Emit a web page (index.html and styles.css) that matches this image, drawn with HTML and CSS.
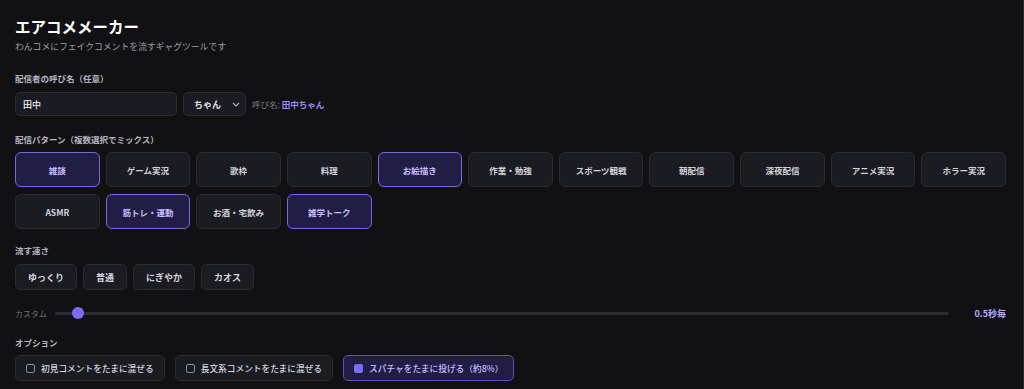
FILE: index.html
```html
<!DOCTYPE html>
<html lang="ja">
<head>
<meta charset="utf-8">
<title>エアコメメーカー</title>
<link rel="stylesheet" href="styles.css">
</head>
<body>
<main class="app">
  <h1 class="title">エアコメメーカー</h1>
  <p class="sub">わんコメにフェイクコメントを流すギャグツールです</p>

  <section class="sec sec-name">
    <div class="label">配信者の呼び名（任意）</div>
    <div class="name-row">
      <input class="input" type="text" value="田中">
      <select class="select"><option>ちゃん</option></select>
      <span class="preview">呼び名: <b>田中ちゃん</b></span>
    </div>
  </section>

  <section class="sec sec-pattern">
    <div class="label">配信パターン（複数選択でミックス）</div>
    <div class="grid">
      <button class="chip on">雑談</button>
      <button class="chip">ゲーム実況</button>
      <button class="chip">歌枠</button>
      <button class="chip">料理</button>
      <button class="chip on">お絵描き</button>
      <button class="chip">作業・勉強</button>
      <button class="chip">スポーツ観戦</button>
      <button class="chip">朝配信</button>
      <button class="chip">深夜配信</button>
      <button class="chip">アニメ実況</button>
      <button class="chip">ホラー実況</button>
      <button class="chip">ASMR</button>
      <button class="chip on">筋トレ・運動</button>
      <button class="chip">お酒・宅飲み</button>
      <button class="chip on">雑学トーク</button>
    </div>
  </section>

  <section class="sec sec-speed">
    <div class="label">流す速さ</div>
    <div class="speed-row">
      <button class="pill">ゆっくり</button>
      <button class="pill">普通</button>
      <button class="pill">にぎやか</button>
      <button class="pill">カオス</button>
    </div>
    <div class="slider-row">
      <span class="slider-label">カスタム</span>
      <div class="track"><span class="thumb"></span></div>
      <span class="slider-value">0.5秒毎</span>
    </div>
  </section>

  <section class="sec sec-opt">
    <div class="label">オプション</div>
    <div class="opt-row">
      <label class="opt"><span class="box"></span>初見コメントをたまに混ぜる</label>
      <label class="opt"><span class="box"></span>長文系コメントをたまに混ぜる</label>
      <label class="opt opt-on"><span class="box"></span>スパチャをたまに投げる（約8%）</label>
    </div>
  </section>
</main>
</body>
</html>
```

FILE: styles.css
```css
* { box-sizing: border-box; }
html, body { margin: 0; height: 100%; }
body {
  background: #111114;
  color: #e8e8ee;
  font-family: "Noto Sans CJK JP", "Noto Sans", sans-serif;
  border-right: 1px solid #2a2a30;
  overflow: hidden;
}
.app { padding: 15px 17px 0 15px; }
.title {
  margin: 0;
  font-size: 15.5px;
  line-height: 22px;
  font-weight: 700;
  color: #ffffff;
}
.sub {
  margin: 2px 0 0;
  font-size: 8.8px;
  line-height: 16px;
  color: #9b9ba6;
}
.label {
  font-size: 8.5px;
  line-height: 14px;
  font-weight: 700;
  color: #b5b5bf;
}
.sec-name { margin-top: 16px; }
.name-row {
  margin-top: 7px;
  display: flex;
  align-items: center;
  gap: 6px;
}
.input {
  width: 162px;
  height: 24px;
  background: #1b1b23;
  border: 1px solid #2b2b34;
  border-radius: 5px;
  color: #f0f0f4;
  font: 500 9px "Noto Sans CJK JP", sans-serif;
  padding: 0 7px;
  outline: none;
}
.select {
  -webkit-appearance: none;
  appearance: none;
  width: 63px;
  height: 24px;
  background: #1b1b23 url("data:image/svg+xml,%3Csvg xmlns='http://www.w3.org/2000/svg' width='8' height='5' viewBox='0 0 8 5'%3E%3Cpath d='M1 1l3 3 3-3' fill='none' stroke='%23b0b0ba' stroke-width='1.1'/%3E%3C/svg%3E") no-repeat right 5px center;
  border: 1px solid #2b2b34;
  border-radius: 5px;
  color: #e0e0e6;
  font: 700 9px "Noto Sans CJK JP", sans-serif;
  padding: 0 10px;
}
.preview {
  font-size: 8.5px;
  color: #7a7a85;
}
.preview b { color: #9a8cf5; font-weight: 700; }

.sec-pattern { margin-top: 16px; }
.grid {
  margin-top: 6px;
  display: grid;
  grid-template-columns: repeat(11, 1fr);
  gap: 7px 6px;
}
.chip {
  height: 35px;
  background: #1b1b22;
  border: 1px solid #2a2a33;
  border-radius: 6px;
  color: #d2d2da;
  font: 700 8.5px "Noto Sans CJK JP", sans-serif;
  padding: 0;
}
.chip.on {
  background: #221d44;
  border: 1.5px solid #7a68e0;
  color: #c6bcff;
}

.sec-speed { margin-top: 14px; }
.speed-row {
  margin-top: 7px;
  display: flex;
  gap: 6px;
}
.pill {
  height: 26px;
  background: #1b1b22;
  border: 1px solid #2a2a33;
  border-radius: 5px;
  color: #d6d6de;
  font: 700 9px "Noto Sans CJK JP", sans-serif;
  padding: 0 12px;
}
.slider-row {
  margin-top: 16px;
  display: flex;
  align-items: center;
  height: 14px;
}
.slider-label {
  font-size: 8px;
  color: #6f6f7a;
  width: 40px;
}
.track {
  flex: 1;
  height: 3px;
  background: #2c2c36;
  border-radius: 2px;
  position: relative;
}
.thumb {
  position: absolute;
  left: 17px;
  top: -5px;
  width: 12px;
  height: 12px;
  border-radius: 50%;
  background: #7d6cf4;
}
.slider-value {
  width: 57px;
  text-align: right;
  font-size: 9px;
  font-weight: 700;
  color: #b3a8ff;
}

.sec-opt { margin-top: 15px; }
.opt-row {
  margin-top: 6px;
  display: flex;
  gap: 10px;
}
.opt {
  height: 26px;
  display: flex;
  align-items: center;
  gap: 6px;
  padding: 0 10px;
  background: #1b1b22;
  border: 1px solid #2a2a33;
  border-radius: 5px;
  font-size: 8.7px;
  font-weight: 500;
  color: #d6d6de;
}
.box {
  width: 9px;
  height: 9px;
  border: 1px solid #8a8a95;
  border-radius: 2px;
}
.opt-on {
  background: #221d44;
  border-color: #5e50b8;
  color: #c6bcff;
}
.opt-on .box {
  background: #7d6cf4;
  border-color: #7d6cf4;
}
```
